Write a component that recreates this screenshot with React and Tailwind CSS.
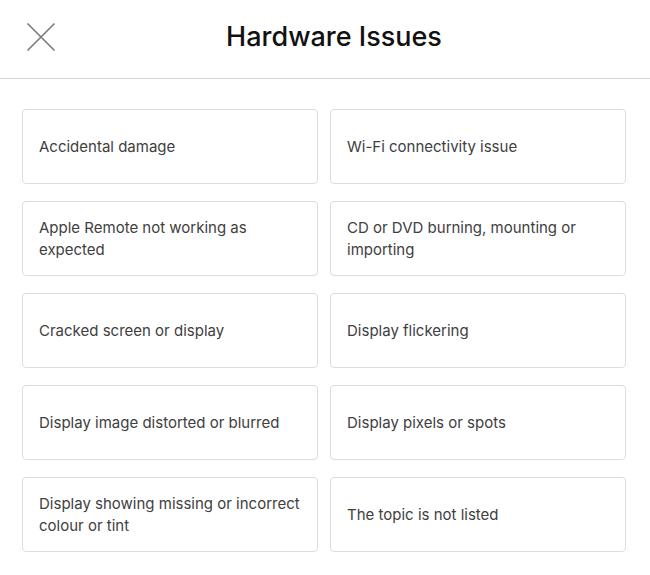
import React from "react";

const items = [
  "Accidental damage",
  "Wi-Fi connectivity issue",
  "Apple Remote not working as expected",
  "CD or DVD burning, mounting or importing",
  "Cracked screen or display",
  "Display flickering",
  "Display image distorted or blurred",
  "Display pixels or spots",
  "Display showing missing or incorrect colour or tint",
  "The topic is not listed",
];

export default function App() {
  return (
    <div className="w-[650px] h-[575px] bg-white overflow-hidden" style={{ fontFamily: "Inter, 'Noto Sans', sans-serif" }}>
      <div className="relative h-[79px] border-b border-[#d6d6d6] flex items-center justify-center pl-[18px]">
        <button className="absolute left-[26px] top-[22px] w-[30px] h-[30px] flex items-center justify-center">
          <svg width="30" height="30" viewBox="0 0 30 30" fill="none">
            <path d="M1.5 1.5 L28.5 28.5 M28.5 1.5 L1.5 28.5" stroke="#7a7a7a" strokeWidth="1.6" />
          </svg>
        </button>
        <h1 className="text-[27px] font-medium text-[#111] leading-none mb-[5px]">Hardware Issues</h1>
      </div>
      <div className="pl-[22px] pt-[30px] grid grid-cols-[296px_296px] gap-x-[12px] gap-y-[17px]">
        {items.map((t) => (
          <div key={t} className="h-[75px] border border-[#dcdcdc] rounded-[4px] flex items-center pl-[16px] pr-[10px]">
            <span className="text-[15px] leading-[22px] text-[#404040]">{t}</span>
          </div>
        ))}
      </div>
    </div>
  );
}
